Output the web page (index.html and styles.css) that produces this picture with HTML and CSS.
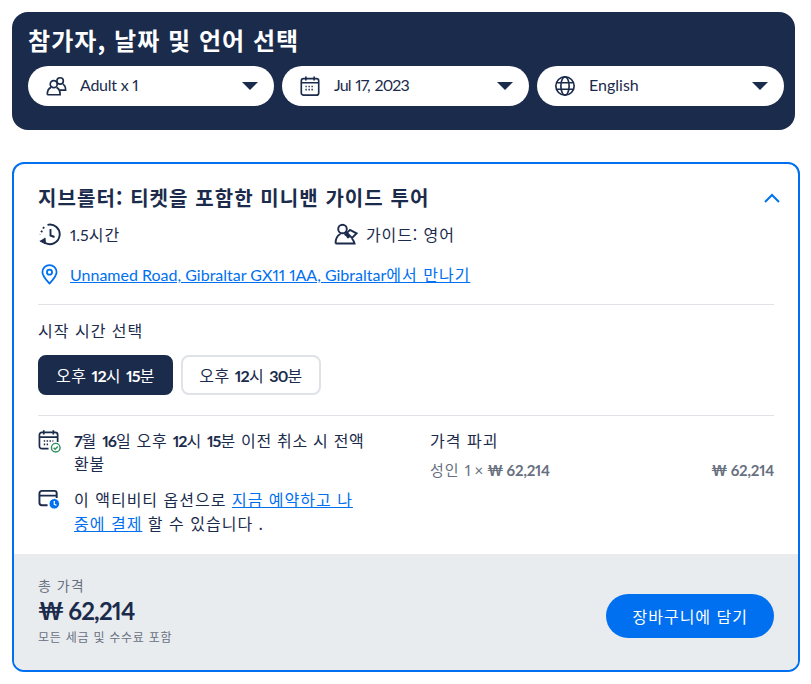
FILE: index.html
```html
<!DOCTYPE html>
<html lang="ko">
<head>
<meta charset="utf-8">
<title>투어 옵션</title>
<link rel="stylesheet" href="styles.css">
</head>
<body>
<section class="picker">
  <h2 class="picker-title">참가자, 날짜 및 언어 선택</h2>
  <div class="picker-row">
    <div class="select">
      <svg class="select-icon" viewBox="0 0 24 24" fill="none" stroke="#1b2b4b" stroke-width="1.8"><circle cx="9.500" cy="10" r="3.800"/><circle cx="16.500" cy="6.500" r="3.500"/><path d="M2.500 21.500c0-4.500 1.500-7 4-8M12.500 13.500c2.500 1 4 3.500 4 8H2.500M19.500 10c2 .8 3 3 3 6.500H16"/></svg>
      <span class="select-label lat tight">Adult x 1</span>
      <span class="caret"></span>
    </div>
    <div class="select">
      <svg class="select-icon" viewBox="0 0 24 24" fill="none" stroke="#1b2b4b" stroke-width="1.8"><rect x="2.500" y="4" width="19" height="18" rx="2.500"/><path d="M7.500 1.500v4.500M16.500 1.500v4.500M2.500 8.500h19"/><path stroke-dasharray="1.500 1.800" d="M7 12.500h10M7 16h10"/></svg>
      <span class="select-label lat date">Jul 17, 2023</span>
      <span class="caret"></span>
    </div>
    <div class="select">
      <svg class="select-icon" viewBox="0 0 24 24" fill="none" stroke="#1b2b4b" stroke-width="1.800"><circle cx="12" cy="12" r="10"/><ellipse cx="12" cy="12" rx="4.500" ry="10"/><path d="M2.500 8.500h19M2.500 15.500h19"/></svg>
      <span class="select-label lat">English</span>
      <span class="caret"></span>
    </div>
  </div>
</section>

<section class="card">
  <div class="card-body">
    <div class="card-head">
      <h3 class="card-title">지브롤터: 티켓을 포함한 미니밴 가이드 투어</h3>
      <svg class="chevron" viewBox="0 0 18 10" fill="none" stroke="#0070f0" stroke-width="2"><path d="M2 9l7-7 7 7"/></svg>
    </div>
    <div class="facts">
      <div class="fact">
        <svg class="fact-icon" viewBox="0 0 24 24" fill="none" stroke="#1b2b4b" stroke-width="1.900"><path d="M9.500 2.800A9.800 9.800 0 1 1 7 20.800"/><path d="M12.500 7v6.500l4 1.500"/><path d="M1.800 19l5.600 2.800-.4-6" fill="#1b2b4b" stroke-width="1"/><path stroke-dasharray="1.800 2.300" d="M6 5L2 12.500"/></svg>
        <span><span class="lat">1.5</span>시간</span>
      </div>
      <div class="fact">
        <svg class="fact-icon" viewBox="0 0 24 24" fill="none" stroke="#1b2b4b" stroke-width="1.900"><circle cx="8.500" cy="7" r="4.300"/><path d="M1.500 21.500c0-5 1.800-8 5-9.500M10.500 12c1.700.7 3 2 3.800 4M1.500 21.500h19c-.5-2-1.300-3.500-2.500-5"/><path d="M15 16l-3.500-6.500M13 10.800l3-3 6.500 3.500-4.500 4.500z"/></svg>
        <span>가이드: 영어</span>
      </div>
    </div>
    <div class="meet">
      <svg class="meet-icon" viewBox="0 0 18 22" fill="none" stroke="#0070f0" stroke-width="1.900"><path d="M9 20.500C5 16 1.500 12.500 1.500 8.500a7.500 7.500 0 0 1 15 0c0 4-3.500 7.500-7.500 12z"/><circle cx="9" cy="8.500" r="2.700"/></svg>
      <a class="link" href="#"><span class="lat">Unnamed Road, Gibraltar GX11 1AA, Gibraltar</span>에서 만나기</a>
    </div>
    <hr class="rule">
    <div class="time-label">시작 시간 선택</div>
    <div class="times">
      <button class="time time-on">오후 <span class="lat">12</span>시 <span class="lat">15</span>분</button>
      <button class="time">오후 <span class="lat">12</span>시 <span class="lat">30</span>분</button>
    </div>
    <hr class="rule rule-times">
    <div class="details">
      <div class="policies">
        <div class="policy">
          <svg class="policy-icon" viewBox="0 0 24 24" fill="none" stroke="#1b2b4b" stroke-width="1.800"><path d="M11 20H4a2.500 2.500 0 0 1-2.500-2.500V5.500A2.500 2.500 0 0 1 4 3h14a2.500 2.500 0 0 1 2.500 2.500V13M1.500 8h19M6 .8v4.500M16 .8v4.500"/><path stroke-dasharray="1.500 1.500" d="M6 12h10M6 15.500h5"/><circle cx="18.500" cy="19" r="4.500" stroke="#2f8f5f" stroke-width="1.500" fill="#fff"/><path d="M16.300 19l1.600 1.600 2.800-2.900" stroke="#2f8f5f" stroke-width="1.500"/></svg>
          <p class="policy-text policy-dated"><span class="lat">7</span>월 <span class="lat">16</span>일 오후 <span class="lat">12</span>시 <span class="lat">15</span>분 이전 취소 시 전액 환불</p>
        </div>
        <div class="policy">
          <svg class="policy-icon" viewBox="0 0 24 24" fill="none" stroke="#1b2b4b" stroke-width="2"><path d="M10 18.500H4a2.500 2.500 0 0 1-2.500-2.500V6A2.500 2.500 0 0 1 4 3.500h13A2.500 2.500 0 0 1 19.500 6v5M1.500 8.500h18"/><circle cx="17" cy="17" r="5.500" fill="#0070f0" stroke="#fff" stroke-width="1"/><path d="M17 14v3.500l2.200 1" stroke="#fff" stroke-width="1.300"/></svg>
          <p class="policy-text">이 액티비티 옵션으로 <a class="link" href="#">지금 예약하고 나중에 결제</a> 할 수 있습니다 .</p>
        </div>
      </div>
      <div class="breakdown">
        <div class="breakdown-title">가격 파괴</div>
        <div class="breakdown-row"><span>성인 <span class="lat">1 × <span class="amount">₩ 62,214</span></span></span><span class="lat amount">₩ 62,214</span></div>
      </div>
    </div>
  </div>
  <div class="card-foot">
    <div class="total">
      <div class="total-label">총 가격</div>
      <div class="total-price lat">₩ 62,214</div>
      <div class="total-note">모든 세금 및 수수료 포함</div>
    </div>
    <button class="cart">장바구니에 담기</button>
  </div>
</section>
</body>
</html>
```
FILE: styles.css
```css
* { box-sizing: border-box; }
html, body { margin: 0; padding: 0; }
body {
  padding: 12px 11px 12px 12px;
  background: #fff;
  color: #1b2b4b;
  font-family: "Noto Sans CJK KR", sans-serif;
  font-size: 16px;
  letter-spacing: 1px;
}
.lat {
  font-family: "Lato", "Noto Sans CJK KR", sans-serif;
  font-variant-numeric: proportional-nums;
  letter-spacing: 0;
  line-height: 1;
}
.picker {
  height: 118px;
  margin-right: 5px;
  padding: 11px 11px 0 16px;
  background: #1b2b4b;
  border-radius: 16px;
}
.picker-title {
  margin: 0 0 9px;
  height: 34px;
  color: #fff;
  font-size: 24px;
  line-height: 34px;
  font-weight: 700;
  letter-spacing: 1.050px;
}
.picker-row { display: grid; grid-template-columns: 246fr 247fr 247fr; gap: 8px; }
.select {
  height: 40px;
  display: flex;
  align-items: center;
  padding: 0 16px 0 17px;
  background: #fff;
  border-radius: 20px;
}
.select-icon { width: 22px; height: 22px; flex: none; }
.select-label { flex: 1; margin-left: 13px; padding-bottom: 3px; }
.tight { letter-spacing: -.25px; }
.date { letter-spacing: -.9px; word-spacing: 1.500px; }
.caret {
  width: 0;
  height: 0;
  border-left: 8px solid transparent;
  border-right: 8px solid transparent;
  border-top: 8px solid #1b2b4b;
}
.card {
  height: 510px;
  margin-top: 32px;
  display: flex;
  flex-direction: column;
  border: 2px solid #0070f0;
  border-radius: 12px;
  overflow: hidden;
}
.card-body { flex: 1; padding: 20px 24px 0; }
.card-head { display: flex; justify-content: space-between; align-items: center; height: 28px; }
.card-title { margin: 0; font-size: 20px; line-height: 28px; font-weight: 700; letter-spacing: 1.070px; }
.chevron { width: 18px; height: 10px; margin-right: -7px; }
.facts { display: flex; margin-top: 10px; height: 24px; align-items: center; letter-spacing: .9px; }
.fact { width: 296px; display: flex; align-items: center; gap: 8px; }
.fact-icon { width: 24px; height: 24px; flex: none; }
.meet { display: flex; align-items: center; gap: 12px; margin-top: 16px; height: 24px; padding-left: 3px; }
.meet-icon { width: 17px; height: 21px; flex: none; }
.link { color: #0070f0; text-decoration: underline; }
.rule { margin: 0; border: 0; border-top: 1px solid #dfe2e7; }
.meet + .rule { margin-top: 18px; }
.time-label { margin-top: 14px; line-height: 22px; }
.times { display: flex; gap: 8px; margin-top: 14px; }
.time {
  height: 40px;
  padding: 0 16px;
  background: #fff;
  border: 2px solid #dfe2e7;
  border-radius: 8px;
  color: #1b2b4b;
  font: inherit;
  letter-spacing: .55px;
}
.time-on { background: #1b2b4b; border-color: #1b2b4b; color: #fff; }
.time .lat { font-weight: 700; letter-spacing: -.8px; }
.rule-times { margin-top: 20px; }
.details { display: flex; margin-top: 13px; }
.policies { width: 392px; display: flex; flex-direction: column; gap: 12px; }
.policy { display: flex; gap: 13px; width: 329px; }
.policy-icon { width: 23px; height: 24px; flex: none; }
.policy-text { margin: 0; line-height: 24px; }
.policy-dated { letter-spacing: .7px; line-height: 23px; }
.policy-dated .lat { font-weight: 700; letter-spacing: -1px; }
.breakdown { flex: 1; margin-top: -1px; }
.breakdown-title { line-height: 24px; }
.breakdown-row {
  display: flex;
  justify-content: space-between;
  align-items: baseline;
  margin-top: 7px;
  color: #68707f;
  font-size: 15px;
  line-height: 22px;
}
.amount { font-weight: 700; letter-spacing: -.2px; }
.card-foot {
  height: 116px;
  display: flex;
  align-items: center;
  justify-content: space-between;
  padding: 0 24px;
  background: #e9ecef;
}
.total { margin-top: -3px; }
.total-label { color: #68707f; font-size: 14px; line-height: 20px; }
.total-price { font-size: 24px; line-height: 32px; font-weight: 700; letter-spacing: -.8px; }
.total-note { color: #68707f; font-size: 12px; line-height: 20px; letter-spacing: .75px; }
.cart {
  height: 44px;
  margin-top: 8px;
  padding: 0 26px;
  background: #0070f0;
  border: 0;
  border-radius: 22px;
  color: #fff;
  font: inherit;
  letter-spacing: inherit;
}
```
